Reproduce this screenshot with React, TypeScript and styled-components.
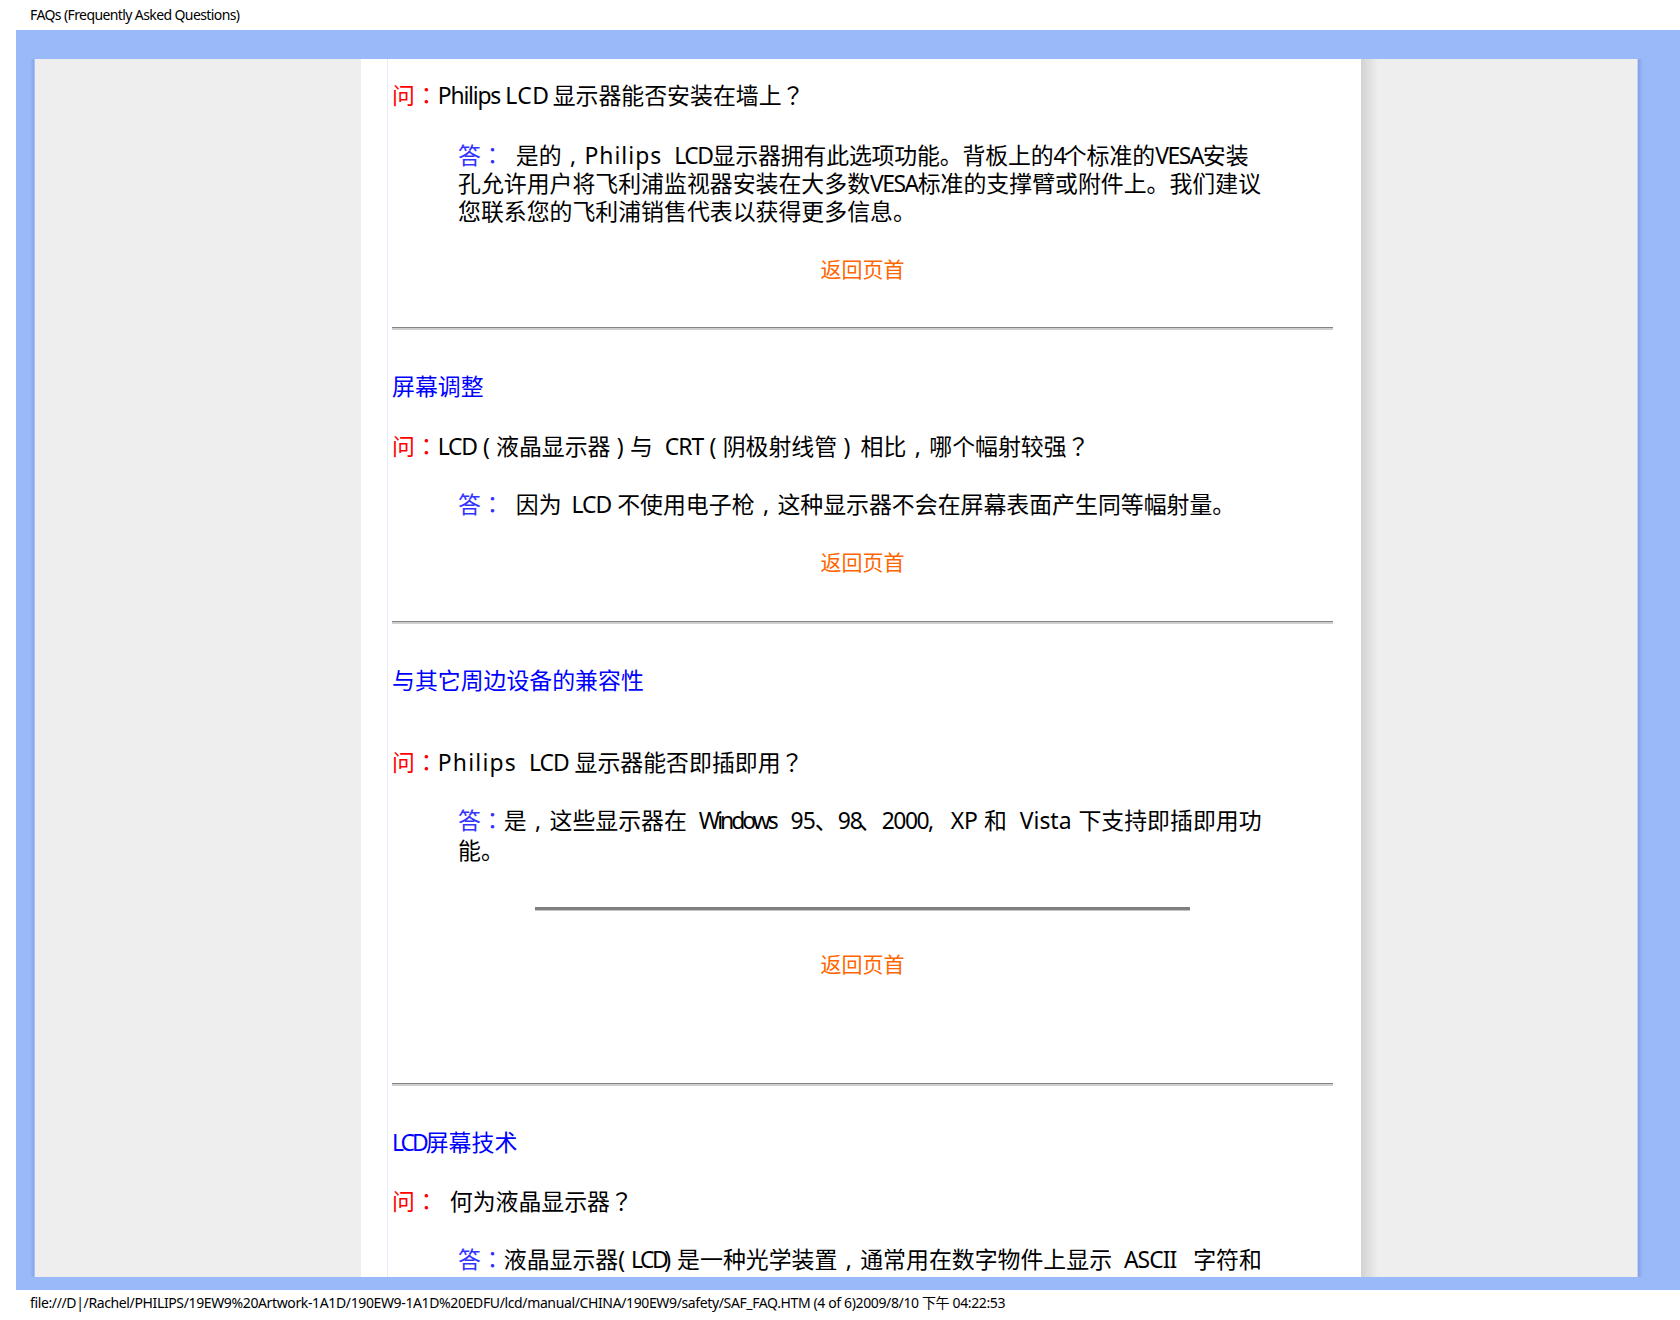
import React from 'react';
import styled, { createGlobalStyle } from 'styled-components';

const GlobalStyle = createGlobalStyle`
  html, body {
    margin: 0;
    padding: 0;
    background: #fff;
  }
  body {
    font-family: "Noto Sans", "Noto Sans CJK SC", sans-serif;
    color: #000;
  }
`;

const Page = styled.div`
  width: 1680px;
  height: 1320px;
  display: flex;
  flex-direction: column;
  overflow: hidden;
`;

const PrintLine = styled.div<{ $height: number; $sp: number }>`
  height: ${(p) => p.$height}px;
  line-height: ${(p) => p.$height}px;
  padding-left: 30px;
  font-size: 14px;
  letter-spacing: ${(p) => p.$sp}px;
  white-space: nowrap;
`;

const Frame = styled.div`
  height: 1260px;
  margin-left: 16px;
  padding: 29px 37px 13px 14px;
  box-sizing: border-box;
  background: #9ab9f8;
  display: flex;
`;

const Columns = styled.div`
  flex: 1;
  display: flex;
  overflow: hidden;
`;

const StripLeft = styled.div`
  width: 5px;
  background: linear-gradient(90deg, #9ab9f8, #8ba9ee 70%, #bccdf6);
`;

const StripRight = styled.div`
  width: 6px;
  background: linear-gradient(90deg, #c5d4f5 0, #c5d4f5 1px, #84a1e8 1px, #9ab9f8);
`;

const SideLeft = styled.div`
  width: 326px;
  background: #eeeeee;
`;

const SideRight = styled.div`
  flex: 1;
  background: linear-gradient(90deg, #d2d2d2 0, #eeeeee 17px);
`;

const Content = styled.div`
  width: 1000px;
  padding-left: 26px;
  box-sizing: border-box;
  background: #fff;
  overflow: hidden;
  display: flex;
`;

const Inner = styled.div`
  flex: 1;
  border-left: 1px solid #e6ecfb;
  padding: 23px 0 0 4px;
  font-size: 22.9px;
  line-height: 28px;
  white-space: nowrap;
`;

const Question = styled.p<{ $top?: number }>`
  margin: ${(p) => p.$top ?? 0}px 0 0;
`;

const QLabel = styled.span`
  color: #ff0000;
`;

const Answer = styled.p<{ $top?: number; $lh?: number }>`
  margin: ${(p) => p.$top ?? 32}px 0 0 66px;
  line-height: ${(p) => p.$lh ?? 28}px;
`;

const ALabel = styled.span`
  color: #3333ff;
`;

const Heading = styled.h3<{ $top: number }>`
  margin: ${(p) => p.$top}px 0 0;
  font-size: 22.9px;
  line-height: 28px;
  font-weight: 400;
  color: #0000ff;
`;

const BackLink = styled.a<{ $top: number }>`
  display: block;
  margin: ${(p) => p.$top}px 0 0;
  text-align: center;
  width: 941px;
  font-size: 21px;
  line-height: 28px;
  color: #ff6600;
`;

const Rule = styled.hr<{ $top: number; $short?: boolean }>`
  display: block;
  margin: ${(p) => p.$top}px 0 0 ${(p) => (p.$short ? 143 : 0)}px;
  width: ${(p) => (p.$short ? 655 : 941)}px;
  height: ${(p) => (p.$short ? 4 : 3)}px;
  border: 0;
  background: ${(p) =>
    p.$short
      ? 'linear-gradient(#808080 3px, #c4c4c4 3px)'
      : 'linear-gradient(#848484 1px, #cfcfcf 1px)'};
`;

// centred full-width punctuation
const Mark = styled.span`
  font-family: "Noto Sans", "Noto Sans CJK TC", sans-serif;
`;

// brackets and commas sit in the middle of a full-width cell here
const Cell = styled.span<{ $w?: number }>`
  display: inline-block;
  width: ${(p) => p.$w ?? 1}em;
  text-align: center;
`;

// latin runs in the print had uneven tracking
const Latin = styled.span<{ $sp?: number; $left?: number; $right?: number }>`
  letter-spacing: ${(p) => p.$sp ?? 0}px;
  margin-left: ${(p) => p.$left ?? 0}px;
  margin-right: ${(p) => p.$right ?? 0}px;
`;

export default function App() {
  return (
    <Page>
      <GlobalStyle />
      <PrintLine $height={30} $sp={-0.6}>FAQs (Frequently Asked Questions)</PrintLine>
      <Frame>
        <Columns>
          <StripLeft />
          <SideLeft />
          <Content>
            <Inner>
              <Question>
                <QLabel>问<Mark>：</Mark></QLabel>
                <Latin $sp={-1.2}>Philips</Latin><Latin $sp={0.6} $left={5} $right={3}>LCD</Latin>显示器能否安装在墙上<Mark>？</Mark>
              </Question>
              <Answer>
                <ALabel>答<Mark>：</Mark></ALabel>
                <Latin $left={12}>是的<Cell>,</Cell></Latin>
                <Latin $sp={1}>Philips</Latin><Latin $sp={-1.5} $left={12}>LCD</Latin><Latin $sp={-0.15}>显示器拥有此选项功能。背板上的</Latin><Latin $sp={-3}>4</Latin>个标准的<Latin $sp={-1.5}>VESA</Latin>安装
                <br />
                孔允许用户将飞利浦监视器安装在大多数<Latin $sp={-1.5}>VESA</Latin>标准的支撑臂或附件上。我们建议
                <br />
                您联系您的飞利浦销售代表以获得更多信息。
              </Answer>
              <BackLink $top={29}>返回页首</BackLink>
              <Rule $top={44} />
              <Heading $top={43}>屏幕调整</Heading>
              <Question $top={32}>
                <QLabel>问<Mark>：</Mark></QLabel>
                <Latin $sp={-1.3}>LCD</Latin><Cell $w={0.85}>(</Cell>液晶显示器<Cell $w={0.85}>)</Cell>与 <Latin $sp={-1} $left={6}>CRT</Latin><Cell $w={0.85}>(</Cell>阴极射线管<Cell $w={0.85}>)</Cell><Latin $left={4}>相比</Latin><Cell>,</Cell>哪个幅射较强<Mark>？</Mark>
              </Question>
              <Answer $top={30}>
                <ALabel>答<Mark>：</Mark></ALabel>
                <Latin $left={12}>因为</Latin> <Latin $sp={-1} $left={4}>LCD</Latin> 不使用电子枪<Cell>,</Cell>这种显示器不会在屏幕表面产生同等幅射量。
              </Answer>
              <BackLink $top={29}>返回页首</BackLink>
              <Rule $top={45} />
              <Heading $top={43}>与其它周边设备的兼容性</Heading>
              <Question $top={54}>
                <QLabel>问<Mark>：</Mark></QLabel>
                <Latin $sp={1.2}>Philips</Latin> <Latin $sp={-1} $left={6}>LCD</Latin> 显示器能否即插即用<Mark>？</Mark>
              </Question>
              <Answer $top={29} $lh={30}>
                <ALabel>答<Mark>：</Mark></ALabel>是<Cell>,</Cell>这些显示器在 <Latin $sp={-3} $left={6} $right={9}>Windows</Latin> <Latin $sp={-1}>95</Latin>、<Latin $sp={-1} $right={-3}>98</Latin>、<Latin $sp={-1.5}>2000,</Latin> <Latin $left={12}>XP</Latin> 和 <Latin $left={7} $right={1}>Vista</Latin> 下支持即插即用功
                <br />
                能。
              </Answer>
              <Rule $top={41} $short />
              <BackLink $top={39}>返回页首</BackLink>
              <Rule $top={105} />
              <Heading $top={43}>
                <Latin $sp={-3}>LCD</Latin>屏幕技术
              </Heading>
              <Question $top={31}>
                <QLabel>问<Mark>：</Mark></QLabel>
                <Latin $left={12}>何为液晶显示器<Mark>？</Mark></Latin>
              </Question>
              <Answer $top={30}>
                <ALabel>答<Mark>：</Mark></ALabel>液晶显示器( <Latin $sp={-2.5} $right={-2}>LCD</Latin>) 是一种光学装置<Cell>,</Cell>通常用在数字物件上显示 <Latin $sp={-1} $left={6}>ASCII</Latin> <Latin $left={11}>字符和</Latin>
              </Answer>
            </Inner>
          </Content>
          <SideRight />
          <StripRight />
        </Columns>
      </Frame>
      <PrintLine $height={26} $sp={-0.37}>
        file:///D|/Rachel/PHILIPS/19EW9%20Artwork-1A1D/190EW9-1A1D%20EDFU/lcd/manual/CHINA/190EW9/safety/SAF_FAQ.HTM (4 of 6)2009/8/10 下午 04:22:53
      </PrintLine>
    </Page>
  );
}
